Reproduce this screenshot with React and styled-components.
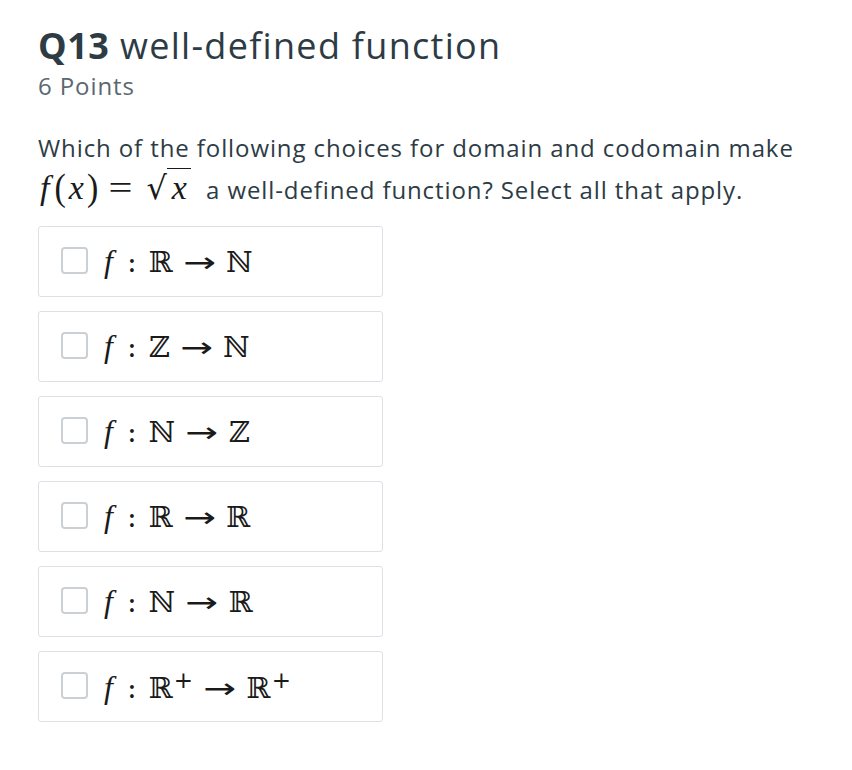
import React from 'react';
import styled, { createGlobalStyle } from 'styled-components';

const GlobalStyle = createGlobalStyle`
  body {
    margin: 0;
    background: #ffffff;
    font-family: 'Open Sans', Lato, sans-serif;
    color: #2d3b45;
  }
`;

const Page = styled.div`
  padding: 23px 38px;
`;

const Title = styled.h2`
  margin: 0;
  font-size: 36px;
  font-weight: 400;
  line-height: 46px;
  color: #2d3b45;
  letter-spacing: 1.3px;
`;

const Bold = styled.span`
  font-weight: 700;
  letter-spacing: 0.5px;
`;

const Points = styled.div`
  font-size: 24px;
  line-height: 34px;
  letter-spacing: 0.9px;
  color: #5c6770;
`;

const Question = styled.p`
  margin: 25px 0 16px;
  font-size: 24px;
  line-height: 40px;
  letter-spacing: 0.9px;
`;

const Math = styled.span`
  font-family: 'Liberation Serif', serif;
  font-size: 34px;
  color: #1a1a1a;
  letter-spacing: 0;
  margin-right: 8px;
`;

const Var = styled.i`
  font-family: 'Liberation Serif', serif;
  font-size: ${(p) => p.size || 34}px;
  margin: 0 ${(p) => p.pad || 0}px;
`;

const Paren = styled.span`
  display: inline-block;
  transform: scaleY(1.1);
  margin: 0 3px;
`;

const Rel = styled.span`
  display: inline-block;
  transform: scaleX(1.25);
  margin: 0 16px 0 10px;
`;

const Radical = styled.span`
  font-family: 'DejaVu Sans', sans-serif;
  font-size: 32px;
`;

const Sqrt = styled.span`
  border-top: 1.5px solid #1a1a1a;
  padding: 0 4px 0 5px;
`;

const Options = styled.div`
  display: flex;
  flex-direction: column;
  gap: 14px;
`;

const Option = styled.label`
  display: flex;
  align-items: center;
  gap: 14px;
  width: 345px;
  height: 71px;
  box-sizing: border-box;
  padding: 0 22px;
  border: 1px solid #dde1e5;
  border-radius: 3px;
`;

const Box = styled.span`
  width: 27px;
  height: 27px;
  box-sizing: border-box;
  border: 2px solid #cbd0d5;
  border-radius: 4px;
  flex-shrink: 0;
  margin-bottom: 2px;
`;

const Formula = styled.span`
  font-family: 'DejaVu Serif', 'Liberation Serif', serif;
  font-size: 29px;
  color: #1a1a1a;
  display: flex;
  align-items: baseline;
  gap: 12px;
`;

const Arrow = styled.span`
  font-family: 'DejaVu Sans', sans-serif;
  font-size: 28px;
  display: inline-block;
  transform: scaleX(1.4);
  margin: 0 3px;
`;

const Sup = styled.sup`
  font-family: 'DejaVu Sans', sans-serif;
  font-size: 23px;
  margin-left: 1px;
  vertical-align: 10px;
`;

const options = [
  ['ℝ', 'ℕ'],
  ['ℤ', 'ℕ'],
  ['ℕ', 'ℤ'],
  ['ℝ', 'ℝ'],
  ['ℕ', 'ℝ'],
  ['ℝ+', 'ℝ+'],
];

const Set = ({ s }) =>
  s.endsWith('+') ? (
    <span>
      {s[0]}
      <Sup>+</Sup>
    </span>
  ) : (
    <span>{s}</span>
  );

export default function App() {
  return (
    <Page>
      <GlobalStyle />
      <Title>
        <Bold>Q13</Bold> well-defined function
      </Title>
      <Points>6 Points</Points>
      <Question>
        Which of the following choices for domain and codomain make
        <br />
        <Math>
          <Var pad={2}>f</Var>
          <Paren>(</Paren>
          <Var>x</Var>
          <Paren>)</Paren>
          <Rel>=</Rel>
          <Radical>√</Radical>
          <Sqrt><Var>x</Var></Sqrt>
        </Math>{' '}
        a well-defined function? Select all that apply.
      </Question>
      <Options>
        {options.map(([a, b], i) => (
          <Option key={i}>
            <Box />
            <Formula>
              <Var size={32} pad={2}>f</Var>
              <span>:</span>
              <Set s={a} />
              <Arrow>→</Arrow>
              <Set s={b} />
            </Formula>
          </Option>
        ))}
      </Options>
    </Page>
  );
}
